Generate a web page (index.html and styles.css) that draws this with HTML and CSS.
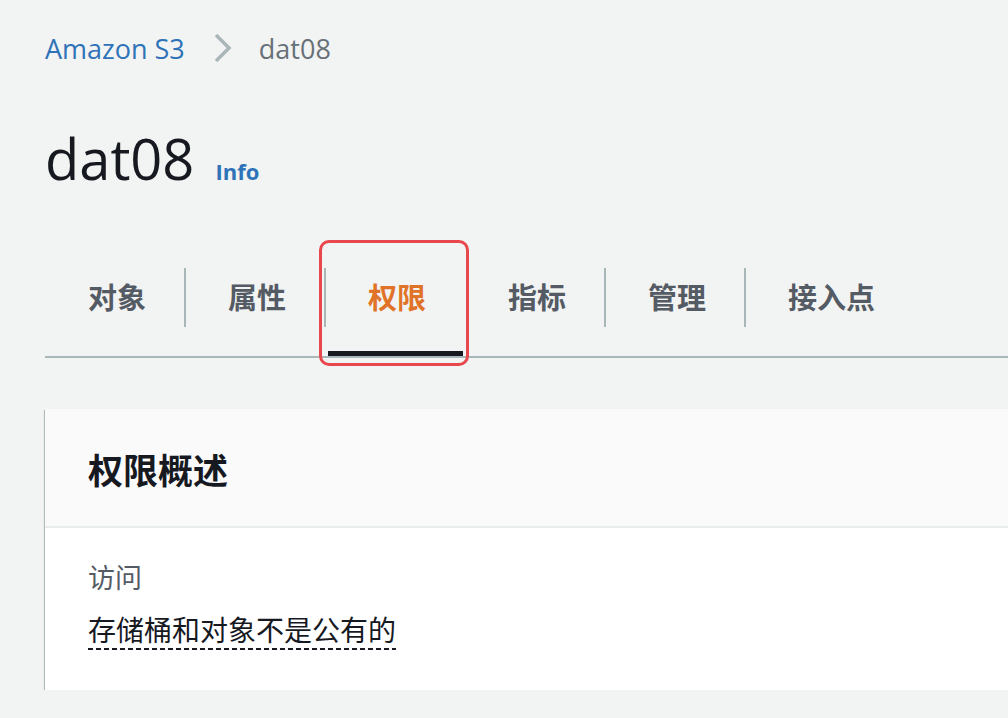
FILE: index.html
```html
<!DOCTYPE html>
<html lang="zh-CN">
<head>
<meta charset="utf-8">
<title>dat08</title>
<link rel="stylesheet" href="styles.css">
</head>
<body>
<main class="page">
  <nav class="breadcrumb">
    <a class="crumb-link" href="#">Amazon S3</a>
    <svg class="crumb-sep" width="20" height="32" viewBox="0 0 20 32"><polyline points="3,3 16,16 3,29" fill="none" stroke="#aab7b8" stroke-width="3.5"/></svg>
    <span class="crumb-current">dat08</span>
  </nav>
  <header class="title-row">
    <h1 class="title">dat08</h1>
    <a class="info" href="#">Info</a>
  </header>
  <div class="tabs">
    <a class="tab" href="#">对象</a>
    <a class="tab" href="#">属性</a>
    <a class="tab tab-active" href="#">权限<span class="highlight"></span></a>
    <a class="tab" href="#">指标</a>
    <a class="tab" href="#">管理</a>
    <a class="tab" href="#">接入点</a>
  </div>
  <section class="card">
    <div class="card-header">
      <h2 class="card-title">权限概述</h2>
    </div>
    <div class="card-body">
      <div class="label">访问</div>
      <div class="value"><span class="dashed">存储桶和对象不是公有的</span></div>
    </div>
  </section>
</main>
</body>
</html>
```

FILE: styles.css
```css
html, body {
  margin: 0;
  padding: 0;
  overflow: hidden;
  background: #f2f3f3;
}
body {
  font-family: "Open Sans", "Noto Sans CJK SC", sans-serif;
  color: #16191f;
}
.page {
  padding: 30px 0 0 45px;
  width: 1100px;
}
.breadcrumb {
  display: flex;
  align-items: center;
  height: 36px;
  font-size: 27px;
}
.crumb-link {
  color: #2e73b8;
  text-decoration: none;
}
.crumb-sep {
  margin: 0 26px 0 28px;
}
.crumb-current {
  color: #687078;
}
.title-row {
  display: flex;
  align-items: baseline;
  margin-top: 60px;
}
.title {
  margin: 0;
  font-size: 56px;
  font-weight: 400;
  line-height: 64px;
}
.info {
  margin-left: 21px;
  font-size: 22px;
  font-weight: 700;
  color: #2e73b8;
  text-decoration: none;
}
.tabs {
  display: flex;
  margin-top: 49px;
  border-bottom: 2px solid #aab7b8;
}
.tab {
  position: relative;
  display: block;
  flex: 0 0 140px;
  box-sizing: border-box;
  padding: 29px 0 29px 43px;
  line-height: 59px;
  font-size: 29px;
  font-weight: 700;
  color: #545b64;
  text-decoration: none;
  white-space: nowrap;
}
.tab + .tab::before {
  content: "";
  position: absolute;
  left: -1px;
  top: 29px;
  width: 2px;
  height: 59px;
  background: #aab7b8;
}
.tab-active + .tab::before {
  display: none;
}
.tab-active {
  color: #e07328;
}
.tab-active::after {
  content: "";
  position: absolute;
  left: 3px;
  right: 2px;
  bottom: 0;
  height: 5px;
  background: #16191f;
}
.highlight {
  position: absolute;
  left: -6px;
  top: 1px;
  width: 150px;
  height: 126px;
  box-sizing: border-box;
  border: 3px solid #e8474c;
  border-radius: 10px;
}
.card {
  margin-top: 51px;
  background: #fff;
  box-shadow: 0 1px 1px 0 rgba(0, 28, 36, 0.45), 1px 1px 1px 0 rgba(0, 28, 36, 0.2), -1px 1px 1px 0 rgba(0, 28, 36, 0.2);
}
.card-header {
  background: #fafafa;
  padding: 42px 43px 35px;
  border-bottom: 2px solid #eaeded;
}
.card-title {
  margin: 0;
  font-size: 35px;
  line-height: 40px;
  font-weight: 700;
}
.card-body {
  padding: 34px 43px 42px;
}
.label {
  font-size: 27px;
  line-height: 32px;
  color: #545b64;
}
.value {
  margin-top: 18px;
  font-size: 28px;
  line-height: 36px;
}
.dashed {
  padding-bottom: 1px;
  background-image: repeating-linear-gradient(to right, #16191f 0 5px, transparent 5px 8px);
  background-size: 100% 2px;
  background-repeat: no-repeat;
  background-position: 0 100%;
}
```
